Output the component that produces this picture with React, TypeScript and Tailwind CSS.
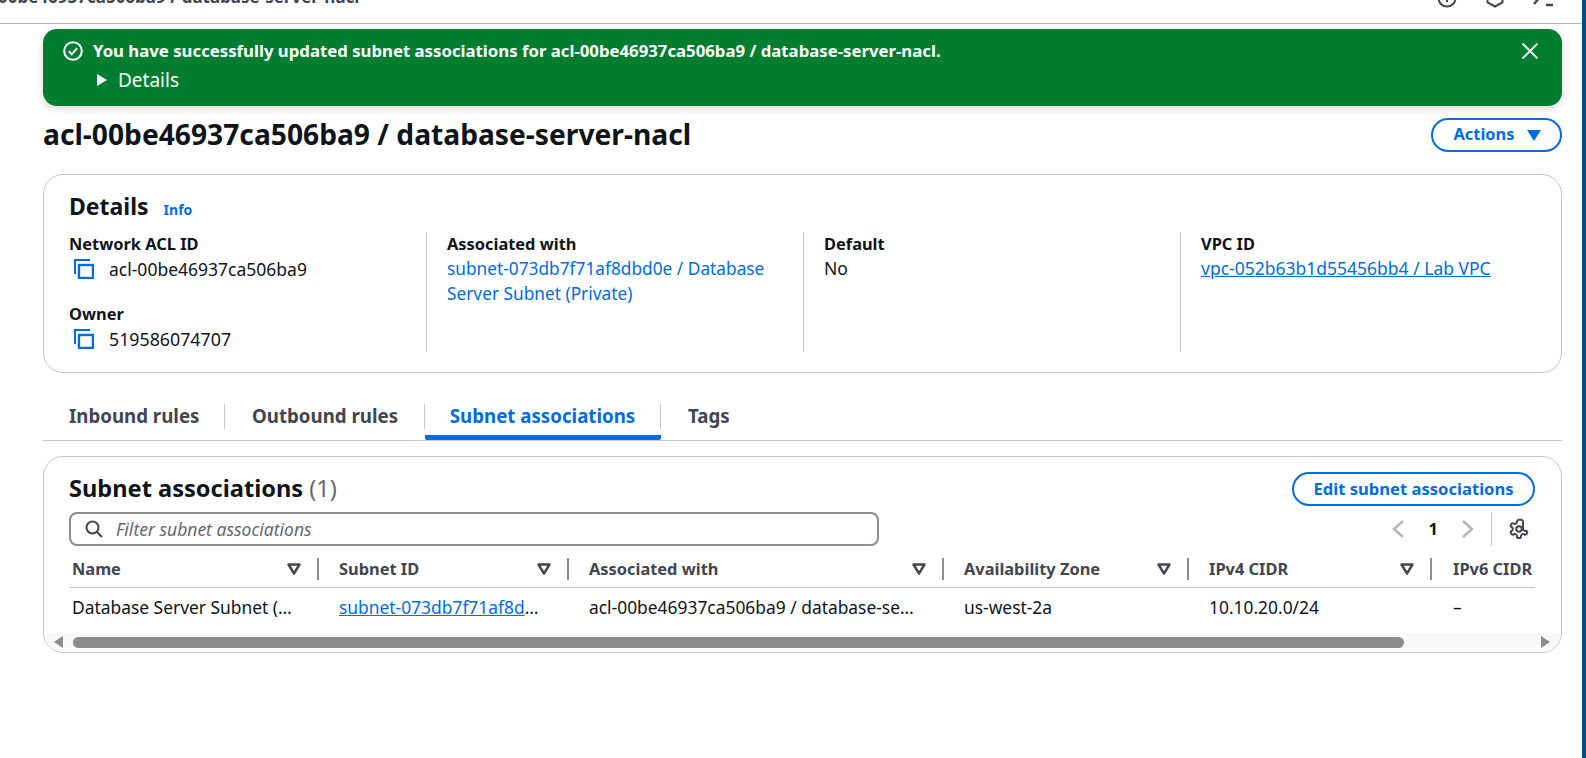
import React from "react";

const CopyIcon = () => (
  <svg width="20" height="20" viewBox="0 0 20 20" fill="none" stroke="#006ce0" className="shrink-0">
    <path d="M1 15V1h15" strokeWidth="2" />
    <rect x="5" y="6" width="14" height="13" strokeWidth="2.4" />
  </svg>
);

const SortIcon = () => (
  <svg width="14" height="12" viewBox="0 0 14 12" fill="none" className="shrink-0">
    <path d="M1.5 1.5h11L7 10.5z" stroke="#424650" strokeWidth="2.4" strokeLinejoin="round" />
  </svg>
);

function HeaderCell({ label, className }: { label: string; className: string }) {
  return (
    <div className={`flex h-[24px] items-center ${className}`}>
      <span className="text-[16.4px] font-bold text-[#424650]">{label}</span>
      <span className="ml-auto flex items-center">
        <SortIcon />
        <span className="ml-[16px] h-[22px] w-[2px] bg-[#8c8c94]" />
      </span>
    </div>
  );
}

export default function App() {
  return (
    <div className="flex h-[758px] w-full overflow-hidden bg-white font-['Noto_Sans',sans-serif] text-[#0f141a]">
      <main className="w-[1582px] shrink-0">
        <header className="flex h-[24px] justify-between overflow-hidden border-b border-[#b4b4bb] pr-[29px]">
          <div className="-mt-[15px] -ml-[2px] text-[17px] font-bold leading-[24px] whitespace-nowrap text-[#424650]">
            00be46937ca506ba9 / database-server-nacl
          </div>
          <div className="-mt-[12px] flex items-start gap-[28px] text-[#424650]">
            <svg width="20" height="20" viewBox="0 0 20 20" fill="none" stroke="currentColor" strokeWidth="2">
              <circle cx="10" cy="10" r="8.5" />
              <path d="M10 9v5M10 5.5v1.5" />
            </svg>
            <svg width="20" height="20" viewBox="0 0 20 20" fill="none" stroke="currentColor" strokeWidth="2">
              <path d="M10 1.5l7.5 4v9l-7.5 4-7.5-4v-9z" />
            </svg>
            <svg width="20" height="20" viewBox="0 0 20 20" fill="none" stroke="currentColor" strokeWidth="2.4">
              <path d="M1 3l6 6-6 7M13 17h7" />
            </svg>
          </div>
        </header>

        <div className="pl-[43px] pr-[20px]">
          {/* flash */}
          <div className="mt-[5px] flex h-[77px] justify-between rounded-[14px] bg-[#017d30] pl-[20px] pr-[24px] text-white shadow-[0_3px_8px_rgba(0,0,0,0.15)]">
            <div className="pt-[10px]">
              <div className="flex h-[24px] items-center gap-[10px]">
                <svg width="20" height="20" viewBox="0 0 20 20" fill="none" stroke="white" strokeWidth="2">
                  <circle cx="10" cy="10" r="8.8" />
                  <path d="M5.8 10.2l3 3 5.4-6" />
                </svg>
                <span className="text-[16.75px] font-bold whitespace-nowrap">
                  You have successfully updated subnet associations for acl-00be46937ca506ba9 / database-server-nacl.
                </span>
              </div>
              <div className="mt-[5px] ml-[34px] flex h-[24px] items-center gap-[11px]">
                <svg width="10" height="12" viewBox="0 0 10 12" fill="white">
                  <path d="M0 0l10 6-10 6z" />
                </svg>
                <span className="text-[19px]">Details</span>
              </div>
            </div>
            <svg className="mt-[14px]" width="16" height="16" viewBox="0 0 16 16" fill="none" stroke="#e8efe9" strokeWidth="2">
              <path d="M0.5 0.5l15 15M15.5 0.5l-15 15" />
            </svg>
          </div>

          {/* title */}
          <div className="mt-[12px] flex h-[34px] items-center justify-between">
            <h1 className="-mt-[2px] text-[28.2px] font-bold whitespace-nowrap">acl-00be46937ca506ba9 / database-server-nacl</h1>
            <button className="flex h-[34px] w-[131px] items-center justify-center gap-[13px] rounded-full border-2 border-[#006ce0] pb-[2px] pl-[2px] text-[16.4px] font-bold text-[#006ce0]">
              Actions
              <svg className="mt-[2px]" width="14" height="11" viewBox="0 0 14 11" fill="#006ce0">
                <path d="M0 0h14L7 11z" />
              </svg>
            </button>
          </div>

          {/* details card */}
          <section className="mt-[22px] h-[199px] rounded-[20px] border border-[#c6c6cd] pl-[25px] pr-[20px]">
            <div className="flex h-[57px] items-center gap-[15px] pt-[6px]">
              <h2 className="text-[23px] font-bold">Details</h2>
              <a className="mt-[5px] text-[14px] font-bold text-[#006ce0]">Info</a>
            </div>
            <div className="grid h-[120px] grid-cols-[358px_377px_377px_1fr] text-[17.5px]">
              <div className="flex flex-col border-r border-[#c6c6cd]">
                <div className="flex h-[24px] items-center text-[16.4px] font-bold">Network ACL ID</div>
                <div className="flex h-[26px] items-center gap-[15px] pl-[5px]">
                  <CopyIcon />
                  <span>acl-00be46937ca506ba9</span>
                </div>
                <div className="mt-[20px] flex h-[24px] items-center text-[16.4px] font-bold">Owner</div>
                <div className="flex h-[26px] items-center gap-[15px] pl-[5px]">
                  <CopyIcon />
                  <span className="text-[17.8px]">519586074707</span>
                </div>
              </div>
              <div className="flex flex-col border-r border-[#c6c6cd] pl-[20px]">
                <div className="flex h-[24px] items-center text-[16.4px] font-bold">Associated with</div>
                <a className="w-[330px] text-[17.3px] leading-[25px] text-[#006ce0]">
                  subnet-073db7f71af8dbd0e / Database Server Subnet (Private)
                </a>
              </div>
              <div className="flex flex-col border-r border-[#c6c6cd] pl-[20px]">
                <div className="flex h-[24px] items-center text-[16.4px] font-bold">Default</div>
                <div className="leading-[25px]">No</div>
              </div>
              <div className="flex flex-col pl-[20px]">
                <div className="flex h-[24px] items-center text-[16.4px] font-bold">VPC ID</div>
                <a className="leading-[25px] text-[#006ce0] underline">vpc-052b63b1d55456bb4 / Lab VPC</a>
              </div>
            </div>
          </section>

          {/* tabs */}
          <nav className="mt-[31px] flex h-[37px] border-b border-[#c6c6cd] text-[18.7px] font-bold text-[#424650]">
            <div className="flex h-[25px] w-[182px] items-center border-r border-[#c6c6cd] pl-[26px]">Inbound rules</div>
            <div className="flex h-[25px] w-[200px] items-center border-r border-[#c6c6cd] pl-[27px]">Outbound rules</div>
            <div className="h-[36px] w-[236px] rounded-b-[2px] border-b-[5px] border-[#006ce0] text-[#006ce0]">
              <div className="flex h-[25px] items-center justify-center border-r border-[#c6c6cd]">Subnet associations</div>
            </div>
            <div className="flex h-[25px] items-center pl-[27px]">Tags</div>
          </nav>

          {/* table card */}
          <section className="mt-[15px] h-[197px] overflow-hidden rounded-[20px] border border-[#c6c6cd]">
            <div className="flex pl-[25px] pr-[26px] pt-[15px]">
              <div className="flex-1">
                <h2 className="flex h-[34px] items-center text-[23.6px] font-bold">
                  Subnet associations<span className="ml-[6px] font-normal text-[#656871]">(1)</span>
                </h2>
                <div className="mt-[6px] flex h-[34px] w-[810px] items-center gap-[13px] rounded-[8px] border-2 border-[#8c8c94] pl-[14px]">
                  <svg width="18" height="18" viewBox="0 0 18 18" fill="none" stroke="#424650" strokeWidth="2">
                    <circle cx="7.5" cy="7.5" r="6" />
                    <path d="M12 12l5 5" />
                  </svg>
                  <span className="text-[17.5px] italic text-[#656871]">Filter subnet associations</span>
                </div>
              </div>
              <div className="flex flex-col items-end">
                <button className="h-[34px] w-[243px] rounded-full border-2 border-[#006ce0] text-[16.6px] font-bold text-[#006ce0]">
                  Edit subnet associations
                </button>
                <div className="mt-[6px] flex h-[34px] items-center">
                  <svg width="14" height="18" viewBox="0 0 14 18" fill="none" stroke="#b4b4bb" strokeWidth="2.4">
                    <path d="M12 1L3 9l9 8" />
                  </svg>
                  <span className="ml-[24px] mr-[23px] text-[16.4px] font-bold">1</span>
                  <svg width="14" height="18" viewBox="0 0 14 18" fill="none" stroke="#b4b4bb" strokeWidth="2.4">
                    <path d="M2 1l9 8-9 8" />
                  </svg>
                  <span className="ml-[16px] h-[34px] w-px bg-[#c6c6cd]" />
                  <svg className="ml-[16px] mr-[5px]" width="22" height="22" viewBox="0 0 24 24" fill="none" stroke="#424650" strokeWidth="2.2" strokeLinejoin="round">
                    <path d="M12.2 2h-.4a2 2 0 0 0-2 2v.2a2 2 0 0 1-1 1.7l-.4.3a2 2 0 0 1-2 0l-.2-.1a2 2 0 0 0-2.7.7l-.2.4a2 2 0 0 0 .7 2.7l.2.1a2 2 0 0 1 1 1.7v.5a2 2 0 0 1-1 1.7l-.2.1a2 2 0 0 0-.7 2.7l.2.4a2 2 0 0 0 2.7.7l.2-.1a2 2 0 0 1 2 0l.4.3a2 2 0 0 1 1 1.7v.2a2 2 0 0 0 2 2h.4a2 2 0 0 0 2-2v-.2a2 2 0 0 1 1-1.7l.4-.3a2 2 0 0 1 2 0l.2.1a2 2 0 0 0 2.7-.7l.2-.4a2 2 0 0 0-.7-2.7l-.2-.1a2 2 0 0 1-2 0l-.4-.3a2 2 0 0 1-1-1.7V4a2 2 0 0 0-2-2z" />
                    <circle cx="12" cy="12" r="3" />
                  </svg>
                </div>
              </div>
            </div>

            <div className="ml-[26px] mr-[26px] mt-[11px]">
              <div className="grid h-[31px] grid-cols-[249px_250px_375px_245px_243px_1fr] items-start border-b border-[#c6c6cd]">
                <HeaderCell label="Name" className="pl-[2px]" />
                <HeaderCell label="Subnet ID" className="pl-[20px]" />
                <HeaderCell label="Associated with" className="pl-[20px]" />
                <HeaderCell label="Availability Zone" className="pl-[20px]" />
                <HeaderCell label="IPv4 CIDR" className="pl-[20px]" />
                <div className="flex h-[24px] items-center pl-[21px] text-[16.4px] font-bold whitespace-nowrap text-[#424650]">IPv6 CIDR</div>
              </div>
              <div className="grid h-[39px] grid-cols-[249px_250px_375px_245px_243px_1fr] items-center text-[17.4px]">
                <div className="truncate pl-[2px] pr-[25px]">Database Server Subnet (Private)</div>
                <div className="truncate pl-[20px] pr-[20px]">
                  <a className="text-[#006ce0] underline">subnet-073db7f71af8dbd0e</a>
                </div>
                <div className="truncate pl-[20px] pr-[25px]">acl-00be46937ca506ba9 / database-server-nacl</div>
                <div className="pl-[20px]">us-west-2a</div>
                <div className="pl-[20px]">10.10.20.0/24</div>
                <div className="pl-[21px]">–</div>
              </div>
            </div>

            {/* scrollbar */}
            <div className="mt-[6px] flex h-[18px] items-center bg-[#f8f8f8] pl-[8px] pr-[9px]">
              <svg width="12" height="12" viewBox="0 0 12 12" fill="#8c8c8c"><path d="M11 0v12L2 6z" /></svg>
              <div className="ml-[9px] h-[11px] w-[1331px] rounded-full bg-[#8c8c8c]" />
              <svg className="ml-auto" width="12" height="12" viewBox="0 0 12 12" fill="#8c8c8c"><path d="M1 0v12l9-6z" /></svg>
            </div>
          </section>
        </div>
      </main>
      <div className="w-[4px] shrink-0 bg-[#0a4d7c]" />
    </div>
  );
}
